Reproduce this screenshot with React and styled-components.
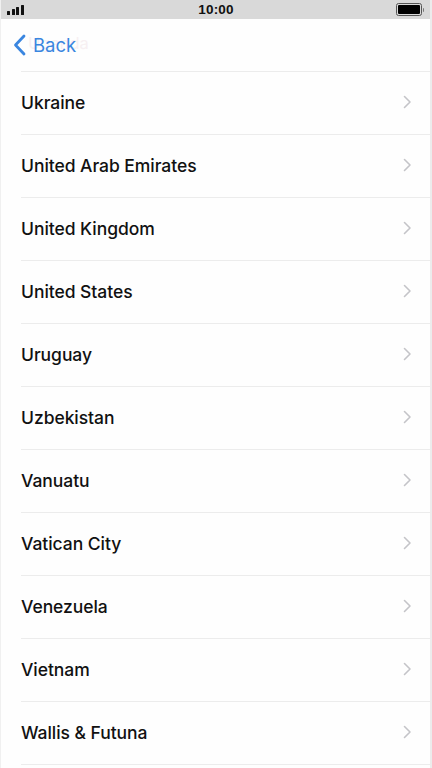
import React from "react";
import styled, { createGlobalStyle } from "styled-components";

const Global = createGlobalStyle`
  html, body { margin: 0; padding: 0; background: #ffffff; }
  body { font-family: Inter, "Noto Sans", sans-serif; -webkit-font-smoothing: antialiased; }
`;

const Screen = styled.div`
  width: 432px;
  height: 768px;
  overflow: hidden;
  display: flex;
  flex-direction: column;
  background: #fefefe;
  box-sizing: border-box;
  border-left: 1px solid #f0f0f0;
  border-right: 2px solid #ececec;
`;

const StatusBar = styled.div`
  height: 19px;
  flex: none;
  background: #d9d9d9;
  display: grid;
  grid-template-columns: 1fr auto 1fr;
  align-items: center;
  padding: 0 6px;
  margin: 0 -2px 0 -1px;
`;

const Signal = styled.div`
  display: flex;
  align-items: flex-end;
  gap: 1.5px;
  height: 10px;
  padding-left: 1px;
`;

const Bar = styled.span`
  width: 3px;
  height: ${(p) => p.h}px;
  background: #111;
  border-radius: 0.5px;
`;

const Time = styled.div`
  font-family: "Liberation Sans", Arial, sans-serif;
  font-size: 13.5px;
  font-weight: 600;
  color: #111;
  letter-spacing: 0.2px;
`;

const BatteryWrap = styled.div`
  justify-self: end;
  display: flex;
  align-items: center;
  padding-right: 2px;
`;

const Battery = styled.div`
  width: 22px;
  height: 9px;
  border: 1px solid #555;
  border-radius: 2.5px;
  padding: 1px;
  box-sizing: content-box;
`;

const BatteryFill = styled.div`
  width: 100%;
  height: 100%;
  background: #000;
  border-radius: 1px;
`;

const BatteryTip = styled.div`
  width: 1.5px;
  height: 4px;
  background: #777;
  margin-left: 1px;
  border-radius: 0 1px 1px 0;
`;

const NavBar = styled.div`
  height: 52px;
  flex: none;
  display: flex;
  align-items: center;
  padding-left: 12px;
  position: relative;
`;

const BackButton = styled.div`
  display: flex;
  align-items: center;
  gap: 7px;
  color: #3a86e0;
  font-size: 18.5px;
  font-weight: 400;
  position: relative;
  z-index: 1;
  margin-top: -1px;
`;

const Ghost = styled.span`
  position: absolute;
  left: 27px;
  top: 14px;
  font-size: 16.5px;
  color: #f7f0f2;
  z-index: 0;
`;

const List = styled.div`
  display: flex;
  flex-direction: column;
`;

const Row = styled.div`
  height: 63px;
  flex: none;
  display: flex;
  align-items: center;
  justify-content: space-between;
  margin-left: 20px;
  padding-right: 18px;
  padding-bottom: 2px;
  border-top: 1px solid #ececec;
  box-sizing: border-box;
`;

const Label = styled.span`
  font-size: 17.5px;
  font-weight: 500;
  color: #111;
  letter-spacing: -0.05px;
`;

const Chevron = () => (
  <svg width="9" height="14" viewBox="0 0 9 14">
    <path d="M1.5 1.5 L7 7 L1.5 12.5" fill="none" stroke="#c4c4c8" strokeWidth="1.6" strokeLinecap="round" strokeLinejoin="round" />
  </svg>
);

const countries = [
  "Ukraine",
  "United Arab Emirates",
  "United Kingdom",
  "United States",
  "Uruguay",
  "Uzbekistan",
  "Vanuatu",
  "Vatican City",
  "Venezuela",
  "Vietnam",
  "Wallis & Futuna",
  "Western Sahara",
];

export default function App() {
  return (
    <>
      <Global />
      <Screen>
        <StatusBar>
          <Signal>
            <Bar h={4} />
            <Bar h={6} />
            <Bar h={8} />
            <Bar h={10} />
          </Signal>
          <Time>10:00</Time>
          <BatteryWrap>
            <Battery>
              <BatteryFill />
            </Battery>
            <BatteryTip />
          </BatteryWrap>
        </StatusBar>
        <NavBar>
          <Ghost>Uganda</Ghost>
          <BackButton>
            <svg width="13" height="22" viewBox="0 0 13 22">
              <path d="M11 2 L2.5 11 L11 20" fill="none" stroke="#3a86e0" strokeWidth="2.8" strokeLinecap="round" strokeLinejoin="round" />
            </svg>
            Back
          </BackButton>
        </NavBar>
        <List>
          {countries.map((c) => (
            <Row key={c}>
              <Label>{c}</Label>
              <Chevron />
            </Row>
          ))}
        </List>
      </Screen>
    </>
  );
}
